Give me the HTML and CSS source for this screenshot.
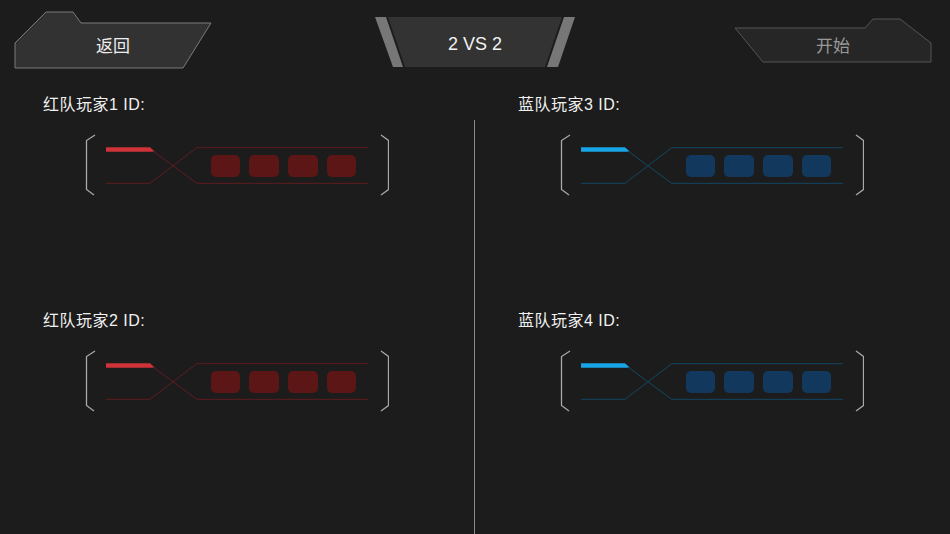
FILE: index.html
```
<!DOCTYPE html>
<html lang="zh-CN">
<head>
    <meta charset="UTF-8">
    <meta name="viewport" content="width=device-width, initial-scale=1.0">
    <title>2 VS 2</title>
    <link rel="stylesheet" href="styles.css">
</head>
<body>
    <header class="topbar">
        <button class="btn btn-back">
            <svg class="btn-shape" width="198" height="58" viewBox="0 0 198 58">
                <polygon points="1,32 32,1 59,1 67,12 197,12 169,57 1,57" fill="#323232" stroke="#7a7a7a" stroke-width="1"/>
            </svg>
            <span class="btn-label">返回</span>
        </button>

        <div class="versus">
            <svg class="btn-shape" width="200" height="50" viewBox="0 0 200 50">
                <polygon points="0,0 11,0 28,50 18,50" fill="#777"/>
                <polygon points="13,0 187,0 170,50 30,50" fill="#333"/>
                <polygon points="189,0 200,0 183,50 172,50" fill="#777"/>
            </svg>
            <span class="versus-label">2 VS 2</span>
        </div>

        <button class="btn btn-start">
            <svg class="btn-shape" width="198" height="45" viewBox="0 0 198 45">
                <polygon points="1,10 131,10 139,1 166,1 197,25 197,44 29,44" fill="#262626" stroke="#555" stroke-width="1"/>
            </svg>
            <span class="btn-label">开始</span>
        </button>
    </header>

    <main class="teams">
        <section class="team team-red">
            <div class="player">
                <div class="player-label">红队玩家1 ID:</div>
                <div class="id-box">
                    <svg class="id-frame" width="304" height="64" viewBox="0 0 304 64">
                        <polyline class="bracket" points="10,2 1.5,7.5 1.5,56.5 9,62"/>
                        <polyline class="bracket" points="296,2 303.5,7.5 303.5,56.5 296,62"/>
                        <polygon class="bar" points="21,14.3 65,14.3 70,18.7 21,18.7"/>
                        <path class="wire" d="M68,18 L111.7,50.3 L283,50.3"/>
                        <path class="wire" d="M21,50.3 L65,50.3 L111.7,14.7 L283,14.7"/>
                    </svg>
                    <div class="slots">
                        <span class="slot"></span><span class="slot"></span><span class="slot"></span><span class="slot"></span>
                    </div>
                </div>
            </div>
            <div class="player">
                <div class="player-label">红队玩家2 ID:</div>
                <div class="id-box">
                    <svg class="id-frame" width="304" height="64" viewBox="0 0 304 64">
                        <polyline class="bracket" points="10,2 1.5,7.5 1.5,56.5 9,62"/>
                        <polyline class="bracket" points="296,2 303.5,7.5 303.5,56.5 296,62"/>
                        <polygon class="bar" points="21,14.3 65,14.3 70,18.7 21,18.7"/>
                        <path class="wire" d="M68,18 L111.7,50.3 L283,50.3"/>
                        <path class="wire" d="M21,50.3 L65,50.3 L111.7,14.7 L283,14.7"/>
                    </svg>
                    <div class="slots">
                        <span class="slot"></span><span class="slot"></span><span class="slot"></span><span class="slot"></span>
                    </div>
                </div>
            </div>
        </section>

        <div class="divider"></div>

        <section class="team team-blue">
            <div class="player">
                <div class="player-label">蓝队玩家3 ID:</div>
                <div class="id-box">
                    <svg class="id-frame" width="304" height="64" viewBox="0 0 304 64">
                        <polyline class="bracket" points="10,2 1.5,7.5 1.5,56.5 9,62"/>
                        <polyline class="bracket" points="296,2 303.5,7.5 303.5,56.5 296,62"/>
                        <polygon class="bar" points="21,14.3 65,14.3 70,18.7 21,18.7"/>
                        <path class="wire" d="M68,18 L111.7,50.3 L283,50.3"/>
                        <path class="wire" d="M21,50.3 L65,50.3 L111.7,14.7 L283,14.7"/>
                    </svg>
                    <div class="slots">
                        <span class="slot"></span><span class="slot"></span><span class="slot"></span><span class="slot"></span>
                    </div>
                </div>
            </div>
            <div class="player">
                <div class="player-label">蓝队玩家4 ID:</div>
                <div class="id-box">
                    <svg class="id-frame" width="304" height="64" viewBox="0 0 304 64">
                        <polyline class="bracket" points="10,2 1.5,7.5 1.5,56.5 9,62"/>
                        <polyline class="bracket" points="296,2 303.5,7.5 303.5,56.5 296,62"/>
                        <polygon class="bar" points="21,14.3 65,14.3 70,18.7 21,18.7"/>
                        <path class="wire" d="M68,18 L111.7,50.3 L283,50.3"/>
                        <path class="wire" d="M21,50.3 L65,50.3 L111.7,14.7 L283,14.7"/>
                    </svg>
                    <div class="slots">
                        <span class="slot"></span><span class="slot"></span><span class="slot"></span><span class="slot"></span>
                    </div>
                </div>
            </div>
        </section>
    </main>
</body>
</html>
```

FILE: styles.css
```
* {
    margin: 0;
    padding: 0;
    box-sizing: border-box;
}

body {
    width: 950px;
    height: 534px;
    overflow: hidden;
    background: #1c1c1c;
    color: #eee;
    font-family: 'Liberation Sans', 'Noto Sans CJK SC', sans-serif;
}

/* top bar */
.topbar {
    height: 80px;
    display: grid;
    grid-template-columns: 1fr auto 1fr;
    align-items: start;
    padding: 0 18px 0 14px;
}

.btn {
    position: relative;
    border: none;
    background: none;
    cursor: pointer;
    font-family: inherit;
    display: flex;
    justify-content: center;
}

.btn-shape {
    position: absolute;
    left: 0;
    top: 0;
    display: block;
}

.btn-label {
    position: relative;
    font-size: 17px;
    line-height: 22px;
}

.btn-back {
    justify-self: start;
    width: 198px;
    height: 58px;
    margin-top: 11px;
    padding-top: 25px;
    color: #eee;
}

.btn-start {
    justify-self: end;
    width: 198px;
    height: 45px;
    margin-top: 18px;
    padding-top: 18px;
    color: #999;
}

.versus {
    position: relative;
    width: 200px;
    height: 50px;
    margin: 17px 0 0 4px;
    display: flex;
    justify-content: center;
    padding-top: 16px;
}

.versus-label {
    position: relative;
    font-size: 18px;
    line-height: 22px;
    color: #f2f2f2;
}

/* teams */
.teams {
    height: 454px;
    display: grid;
    grid-template-columns: 474px 1px 1fr;
}

.divider {
    margin-top: 40px;
    background: #8a8a8a;
}

.player {
    height: 216px;
    padding: 13px 0 0 43px;
}

.player-label {
    font-size: 16px;
    line-height: 24px;
    letter-spacing: 0.5px;
    color: #f0f0f0;
}

.id-box {
    position: relative;
    width: 304px;
    height: 64px;
    margin: 16px 0 0 42px;
}

.id-frame {
    display: block;
}

.bracket {
    fill: none;
    stroke: #a8a8a8;
    stroke-width: 1.3;
}

.wire {
    fill: none;
    stroke-width: 1;
}

.slots {
    position: absolute;
    left: 125.7px;
    top: 22px;
    display: flex;
    gap: 9px;
}

.slot {
    width: 29.7px;
    height: 21.7px;
    border-radius: 5px;
}

.team-red .bar { fill: #d0323a; }
.team-red .wire { stroke: #5e1d20; }
.team-red .slot { background: #5c1616; }

.team-blue .bar { fill: #17a5e6; }
.team-blue .wire { stroke: #124863; }
.team-blue .slot { background: #12395d; }
```
